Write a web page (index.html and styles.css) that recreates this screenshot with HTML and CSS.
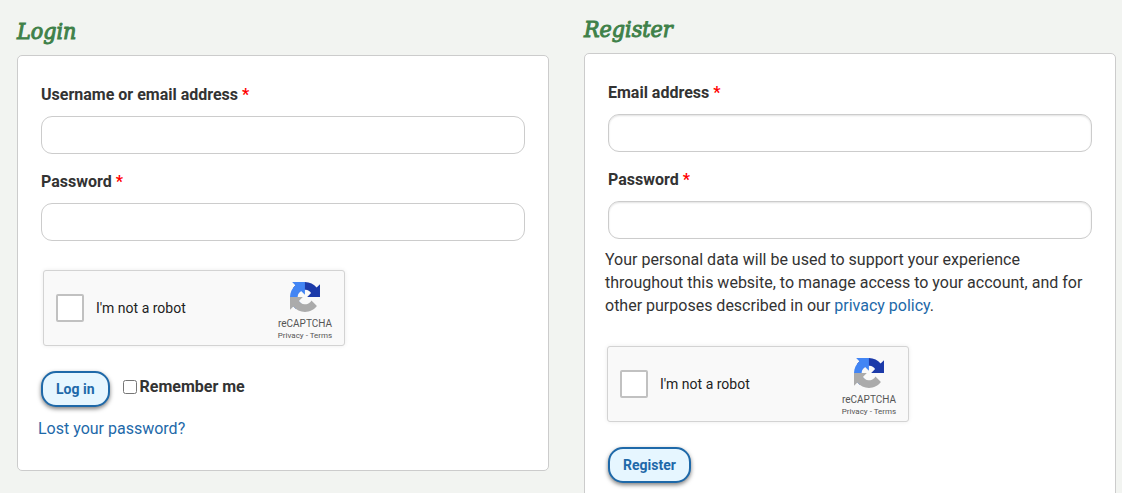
FILE: index.html
```html
<!DOCTYPE html>
<html lang="en">
  <head>
    <title>My account</title>
    <meta charset="utf-8">
    <link rel="stylesheet" href="styles.css">
  </head>
  <body>
    <svg class="sprite" aria-hidden="true">
      <symbol id="captcha-logo" viewBox="0 0 64 64">
        <path fill="#1c3aa9" d="M64 31.955l-.033-1.37V4.687l-7.16 7.16C50.948 4.674 42.033.093 32.05.093c-10.4 0-19.622 4.96-25.458 12.64l11.736 11.86a15.55 15.55 0 0 1 4.754-5.334c2.05-1.6 4.952-2.906 8.968-2.906.485 0 .86.057 1.135.163 4.976.393 9.288 3.14 11.828 7.124l-8.307 8.307L64 31.953"/>
        <path fill="#4285f4" d="M31.862.094l-1.37.033H4.594l7.16 7.16C4.58 13.147 0 22.06 0 32.046c0 10.4 4.96 19.622 12.64 25.458L24.5 45.768a15.55 15.55 0 0 1-5.334-4.754c-1.6-2.05-2.906-4.952-2.906-8.968 0-.485.057-.86.163-1.135.393-4.976 3.14-9.288 7.124-11.828l8.307 8.307L31.86.095"/>
        <path fill="#ababab" d="M.001 32.045l.033 1.37v25.898l7.16-7.16c5.86 7.173 14.774 11.754 24.76 11.754 10.4 0 19.622-4.96 25.458-12.64l-11.736-11.86a15.55 15.55 0 0 1-4.754 5.334c-2.05 1.6-4.952 2.906-8.968 2.906-.485 0-.86-.057-1.135-.163-4.976-.393-9.288-3.14-11.828-7.124l8.307-8.307c-10.522.04-22.4.066-27.295-.005"/>
      </symbol>
    </svg>
    <main class="account">
      <section class="column login">
        <h2>Login</h2>
        <form class="card">
          <div class="field">
            <label for="username">Username or email address <span class="required">*</span></label>
            <input type="text" id="username" name="username">
          </div>
          <div class="field">
            <label for="password">Password <span class="required">*</span></label>
            <input type="password" id="password" name="password">
          </div>
          <div class="captcha">
            <input type="checkbox" id="robot-login">
            <label for="robot-login">I'm not a robot</label>
            <div class="brand">
              <svg class="logo"><use href="#captcha-logo"/></svg>
              <span class="name">reCAPTCHA</span>
              <span class="legal"><a href="#">Privacy</a> - <a href="#">Terms</a></span>
            </div>
          </div>
          <div class="actions">
            <button type="button">Log in</button>
            <label class="remember"><input type="checkbox" name="remember">Remember me</label>
          </div>
          <p class="lost"><a href="#">Lost your password?</a></p>
        </form>
      </section>
      <section class="column register">
        <h2>Register</h2>
        <form class="card">
          <div class="field">
            <label for="reg_email">Email address <span class="required">*</span></label>
            <input type="email" id="reg_email" name="email">
          </div>
          <div class="field">
            <label for="reg_password">Password <span class="required">*</span></label>
            <input type="password" id="reg_password" name="password">
          </div>
          <p class="privacy">Your personal data will be used to support your experience throughout this website, to manage access to your account, and for other purposes described in our <a href="#">privacy policy</a>.</p>
          <div class="captcha">
            <input type="checkbox" id="robot-register">
            <label for="robot-register">I'm not a robot</label>
            <div class="brand">
              <svg class="logo"><use href="#captcha-logo"/></svg>
              <span class="name">reCAPTCHA</span>
              <span class="legal"><a href="#">Privacy</a> - <a href="#">Terms</a></span>
            </div>
          </div>
          <div class="actions">
            <button type="button">Register</button>
          </div>
        </form>
      </section>
    </main>
  </body>
</html>
```
FILE: styles.css
```css
* {
  box-sizing: border-box;
}

body {
  margin: 0;
  background-color: #f2f4f1;
  color: #333;
  font: 16px/23px Roboto, sans-serif;
}

a {
  color: #1e69a9;
  text-decoration: none;
}

.sprite {
  display: none;
}

.account {
  display: grid;
  grid-template-columns: 1fr 1fr;
  align-items: start;
  gap: 35px;
  padding: 14px 6px 0 17px;
}

.login {
  padding-top: 2px;
}

h2 {
  margin: 0 0 9px;
  color: #3f8149;
  font: italic 23px/30px "DejaVu Serif Condensed", "DejaVu Serif", serif;
  -webkit-text-stroke: 1px #3f8149;
}

.card {
  padding: 27px 20px 30px;
  border: 1px solid #ccc;
  border-radius: 5px;
  background-color: white;
}

.field {
  display: flex;
  flex-direction: column;
  gap: 9px;
  margin: 0 3px 16px;
}

.field label {
  font-weight: bold;
  line-height: 24px;
}

.required {
  color: red;
}

.field input {
  width: 100%;
  height: 38px;
  padding: 0 12px;
  border: 1px solid #ccc;
  border-radius: 11px;
  background-color: white;
  font: inherit;
}

.register .field input {
  box-shadow: inset 0 1px 2px rgba(0, 0, 0, .12);
}

.captcha {
  display: flex;
  align-items: center;
  width: 302px;
  height: 76px;
  margin: 29px 0 25px 5px;
  padding-left: 12px;
  border: 1px solid #d3d3d3;
  border-radius: 3px;
  background-color: #f9f9f9;
  box-shadow: 0 0 4px rgba(0, 0, 0, .08);
  color: #222;
  font-size: 14px;
}

.register .captcha {
  margin-left: 2px;
}

.captcha input {
  appearance: none;
  width: 28px;
  height: 28px;
  margin: 0 12px 0 0;
  border: 2px solid #c1c1c1;
  border-radius: 2px;
  background-color: white;
}

.brand {
  display: flex;
  flex-direction: column;
  align-items: center;
  width: 78px;
  margin-left: auto;
  padding-top: 7px;
  color: #555;
}

.logo {
  width: 30px;
  height: 30px;
  margin-bottom: 6px;
}

.name {
  font-size: 10px;
  line-height: 12px;
}

.legal {
  font-size: 8px;
  line-height: 11px;
}

.legal a {
  color: inherit;
}

.actions {
  display: flex;
  align-items: center;
  gap: 13px;
  margin: 0 3px;
}

.actions button {
  height: 36px;
  padding: 0 13px;
  border: 2px solid #1e69a9;
  border-radius: 15px;
  background-color: #e6f6ff;
  box-shadow: 0 2px 4px rgba(0, 0, 0, .5);
  color: #1e69a9;
  font: bold 14px Roboto, sans-serif;
}

.remember {
  display: flex;
  align-items: center;
  gap: 3px;
  margin-bottom: 5px;
  font-weight: bold;
}

.remember input {
  width: 14px;
  height: 14px;
  margin: 0;
}

.lost {
  margin: 10px 0 0;
}

.privacy {
  margin: -7px 0 0;
}
```
